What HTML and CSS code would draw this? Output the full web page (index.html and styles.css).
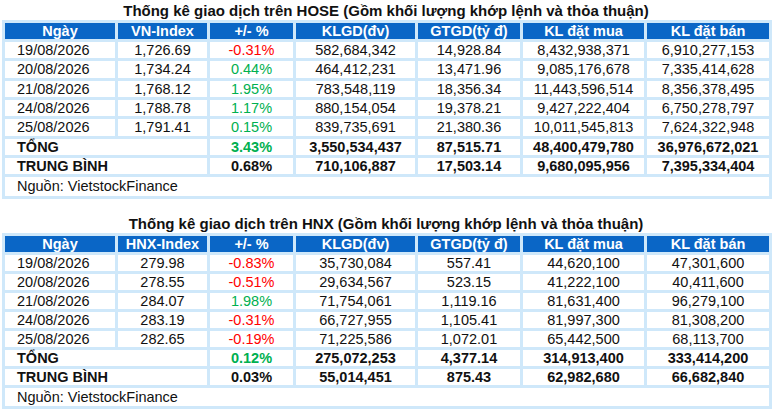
FILE: index.html
```html
<!DOCTYPE html>
<html lang="vi">
<head>
<meta charset="utf-8">
<link rel="stylesheet" href="styles.css">
</head>
<body>
<div class="page">
  <section class="block first">
    <div class="title">Thống kê giao dịch trên HOSE (Gồm khối lượng khớp lệnh và thỏa thuận)</div>
    <table class="stats">
      <colgroup>
        <col class="c1"><col class="c2"><col class="c3"><col class="c4"><col class="c5"><col class="c6"><col class="c7">
      </colgroup>
      <thead>
        <tr><th>Ngày</th><th>VN-Index</th><th>+/- %</th><th>KLGD(đv)</th><th>GTGD(tỷ đ)</th><th>KL đặt mua</th><th>KL đặt bán</th></tr>
      </thead>
      <tbody>
        <tr><td class="date">19/08/2026</td><td>1,726.69</td><td class="neg">-0.31%</td><td>582,684,342</td><td>14,928.84</td><td>8,432,938,371</td><td>6,910,277,153</td></tr>
        <tr><td class="date">20/08/2026</td><td>1,734.24</td><td class="pos">0.44%</td><td>464,412,231</td><td>13,471.96</td><td>9,085,176,678</td><td>7,335,414,628</td></tr>
        <tr><td class="date">21/08/2026</td><td>1,768.12</td><td class="pos">1.95%</td><td>783,548,119</td><td>18,356.34</td><td>11,443,596,514</td><td>8,356,378,495</td></tr>
        <tr><td class="date">24/08/2026</td><td>1,788.78</td><td class="pos">1.17%</td><td>880,154,054</td><td>19,378.21</td><td>9,427,222,404</td><td>6,750,278,797</td></tr>
        <tr><td class="date">25/08/2026</td><td>1,791.41</td><td class="pos">0.15%</td><td>839,735,691</td><td>21,380.36</td><td>10,011,545,813</td><td>7,624,322,948</td></tr>
        <tr class="sum"><td class="date" colspan="2">TỔNG</td><td class="pos">3.43%</td><td>3,550,534,437</td><td>87,515.71</td><td>48,400,479,780</td><td>36,976,672,021</td></tr>
        <tr class="sum"><td class="date" colspan="2">TRUNG BÌNH</td><td>0.68%</td><td>710,106,887</td><td>17,503.14</td><td>9,680,095,956</td><td>7,395,334,404</td></tr>
        <tr><td class="source" colspan="7">Nguồn: VietstockFinance</td></tr>
      </tbody>
    </table>
  </section>
  <section class="block second">
    <div class="title">Thống kê giao dịch trên HNX (Gồm khối lượng khớp lệnh và thỏa thuận)</div>
    <table class="stats">
      <colgroup>
        <col class="c1"><col class="c2"><col class="c3"><col class="c4"><col class="c5"><col class="c6"><col class="c7">
      </colgroup>
      <thead>
        <tr><th>Ngày</th><th>HNX-Index</th><th>+/- %</th><th>KLGD(đv)</th><th>GTGD(tỷ đ)</th><th>KL đặt mua</th><th>KL đặt bán</th></tr>
      </thead>
      <tbody>
        <tr><td class="date">19/08/2026</td><td>279.98</td><td class="neg">-0.83%</td><td>35,730,084</td><td>557.41</td><td>44,620,100</td><td>47,301,600</td></tr>
        <tr><td class="date">20/08/2026</td><td>278.55</td><td class="neg">-0.51%</td><td>29,634,567</td><td>523.15</td><td>41,222,100</td><td>40,411,600</td></tr>
        <tr><td class="date">21/08/2026</td><td>284.07</td><td class="pos">1.98%</td><td>71,754,061</td><td>1,119.16</td><td>81,631,400</td><td>96,279,100</td></tr>
        <tr><td class="date">24/08/2026</td><td>283.19</td><td class="neg">-0.31%</td><td>66,727,955</td><td>1,105.41</td><td>81,997,300</td><td>81,308,200</td></tr>
        <tr><td class="date">25/08/2026</td><td>282.65</td><td class="neg">-0.19%</td><td>71,225,586</td><td>1,072.01</td><td>65,442,500</td><td>68,113,700</td></tr>
        <tr class="sum"><td class="date" colspan="2">TỔNG</td><td class="pos">0.12%</td><td>275,072,253</td><td>4,377.14</td><td>314,913,400</td><td>333,414,200</td></tr>
        <tr class="sum"><td class="date" colspan="2">TRUNG BÌNH</td><td>0.03%</td><td>55,014,451</td><td>875.43</td><td>62,982,680</td><td>66,682,840</td></tr>
        <tr><td class="source" colspan="7">Nguồn: VietstockFinance</td></tr>
      </tbody>
    </table>
  </section>
</div>
</body>
</html>
```
FILE: styles.css
```css
html, body {
  margin: 0;
  padding: 0;
  background: #ffffff;
}
.page {
  font-family: "Liberation Sans", Arial, sans-serif;
  color: #111111;
  padding: 0 0 0 2px;
  width: 768px;
}
.block.second {
  margin-top: 14px;
}
.title {
  height: 20px;
  line-height: 22px;
  text-align: center;
  font-weight: bold;
  font-size: 15px;
  color: #111111;
}
.stats {
  border-collapse: collapse;
  table-layout: fixed;
  width: 767px;
  font-size: 14.5px;
}
.c1 { width: 113px; }
.c2 { width: 92px; }
.c3 { width: 86px; }
.c4 { width: 122px; }
.c5 { width: 105px; }
.c6 { width: 124px; }
.c7 { width: 125px; }
.stats th,
.stats td {
  border: 3px solid #cfe8fa;
  padding: 0;
  height: 16px;
  line-height: 16px;
  text-align: center;
  white-space: nowrap;
}
.first .stats td {
  height: 16.34px;
}
.stats th {
  background: #0a66c6;
  color: #ffffff;
  font-weight: bold;
}
.stats td.date {
  text-align: left;
  padding-left: 12px;
}
.stats td.source {
  text-align: left;
  padding-left: 12px;
  height: 18px;
}
.first .stats td.source {
  height: 18.34px;
}
.sum td {
  font-weight: bold;
}
.neg { color: #ff0000; }
.pos { color: #00b050; }
```
